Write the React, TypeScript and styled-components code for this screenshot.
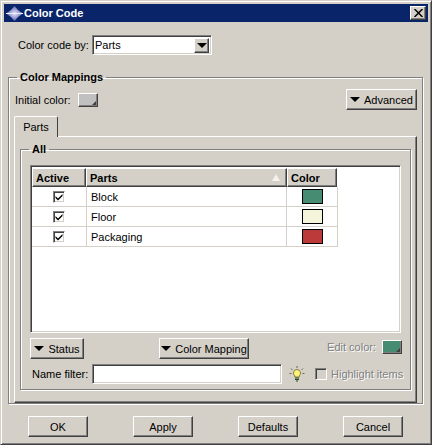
import React from 'react';
import styled, { createGlobalStyle, css } from 'styled-components';

const GlobalStyle = createGlobalStyle`
  * { box-sizing: border-box; }
  html, body { margin: 0; padding: 0; background: #d4d0c8; }
  body { font-family: 'Liberation Sans', Arial, sans-serif; font-size: 11px; color: #000; }
`;

const raised = css`
  background: #d4d0c8;
  border-top: 1px solid #fff;
  border-left: 1px solid #fff;
  border-right: 1px solid #404040;
  border-bottom: 1px solid #404040;
  box-shadow: inset -1px -1px 0 #808080;
`;

const sunken = css`
  background: #fff;
  border-top: 1px solid #808080;
  border-left: 1px solid #808080;
  border-right: 1px solid #fff;
  border-bottom: 1px solid #fff;
  box-shadow: inset 1px 1px 0 #404040, inset -1px -1px 0 #d4d0c8;
`;

const Window = styled.div`
  width: 432px;
  height: 445px;
  padding: 3px 3px 0 3px;
  background: #d4d0c8;
  border-top: 1px solid #d4d0c8;
  border-left: 1px solid #d4d0c8;
  border-right: 1px solid #404040;
  border-bottom: 1px solid #404040;
  box-shadow: inset 1px 1px 0 #fff, inset -1px -1px 0 #808080;
  display: flex;
  flex-direction: column;
`;

const TitleBar = styled.div`
  height: 18px;
  background: #0a246a;
  display: flex;
  align-items: center;
  padding: 0 2px 0 2px;
  gap: 1px;
`;

const TitleText = styled.span`
  flex: 1;
  color: #fff;
  font-weight: 700;
  font-size: 11px;
`;

const CloseButton = styled.button`
  ${raised}
  width: 16px;
  height: 14px;
  padding: 0;
  display: flex;
  align-items: center;
  justify-content: center;
`;

const ComboRow = styled.div`
  display: flex;
  align-items: center;
  height: 20px;
  margin: 13px 0 0 14px;
`;

const Label = styled.span<{ $disabled?: boolean; $w?: number }>`
  flex: none;
  white-space: nowrap;
  width: ${(p) => (p.$w ? `${p.$w}px` : 'auto')};
  color: ${(p) => (p.$disabled ? '#808080' : '#000')};
  text-shadow: ${(p) => (p.$disabled ? '1px 1px 0 #fff' : 'none')};
`;

const Combo = styled.div`
  ${sunken}
  width: 120px;
  height: 20px;
  display: flex;
  align-items: center;
  justify-content: space-between;
  padding: 0 2px 0 2px;
`;

const ComboArrow = styled.span`
  ${raised}
  width: 15px;
  height: 15px;
  display: flex;
  align-items: center;
  justify-content: center;
`;

const Arrow = styled.span`
  width: 0;
  height: 0;
  flex: none;
  border-left: 5px solid transparent;
  border-right: 5px solid transparent;
  border-top: 5px solid #000;
`;

const Group = styled.fieldset`
  margin: 0;
  padding: 0;
  min-width: 0;
  border: 1px solid #808080;
  box-shadow: inset 1px 1px 0 #fff, 1px 1px 0 #fff;
`;

const Legend = styled.legend<{ $indent: number }>`
  padding: 0 3px;
  font-weight: 700;
  margin-left: ${(p) => p.$indent}px;
  line-height: 13px;
`;

const MappingsGroup = styled(Group)`
  width: 415px;
  height: 333px;
  margin: 16px 0 0 4px;
  padding: 0 5px;
`;

const MappingsTop = styled.div`
  display: flex;
  align-items: center;
  justify-content: space-between;
  height: 21px;
  margin: 5px 0 0 0;
  padding-left: 1px;
`;

const InitialRow = styled.div`
  display: flex;
  align-items: center;
  gap: 7px;
`;

const ColorWell = styled.span<{ $color: string; $w: number }>`
  ${raised}
  position: relative;
  display: block;
  width: ${(p) => p.$w}px;
  height: 14px;
  background: ${(p) => p.$color};
  &::after {
    content: '';
    position: absolute;
    right: 1px;
    bottom: 1px;
    width: 0;
    height: 0;
    border-left: 4px solid transparent;
    border-bottom: 4px solid #404040;
  }
`;

const Button = styled.button<{ $w: number }>`
  ${raised}
  width: ${(p) => p.$w}px;
  height: 21px;
  padding: 0;
  display: flex;
  align-items: center;
  justify-content: center;
  gap: 4px;
  font: inherit;
  color: #000;
  white-space: nowrap;
`;

const Tabs = styled.div`
  display: flex;
  margin-top: 6px;
`;

const Tab = styled.div`
  width: 44px;
  height: 21px;
  margin-bottom: -1px;
  position: relative;
  background: #d4d0c8;
  border-top: 1px solid #fff;
  border-left: 1px solid #fff;
  border-right: 1px solid #404040;
  border-top-left-radius: 2px;
  border-top-right-radius: 2px;
  display: flex;
  align-items: center;
  justify-content: center;
`;

const TabPanel = styled.div`
  width: 403px;
  height: 267px;
  border-top: 1px solid #fff;
  border-left: 1px solid #fff;
  border-right: 1px solid #404040;
  border-bottom: 1px solid #404040;
  box-shadow: inset -1px -1px 0 #808080;
  padding: 6px 5px 0 5px;
`;

const AllGroup = styled(Group)`
  height: 247px;
  padding: 0 9px;
`;

const TableFrame = styled.div`
  ${sunken}
  height: 168px;
  margin-top: 9px;
  padding: 2px 1px 1px 1px;
`;

const HeaderRow = styled.div`
  display: flex;
  width: 305px;
  height: 19px;
`;

const HeaderCell = styled.div<{ $w: number }>`
  ${raised}
  position: relative;
  width: ${(p) => p.$w}px;
  font-weight: 700;
  display: flex;
  align-items: center;
  padding-left: 3px;
`;

const SortMark = styled.span`
  position: absolute;
  right: 6px;
  top: 5px;
  width: 0;
  height: 0;
  border-left: 4px solid transparent;
  border-right: 4px solid transparent;
  border-bottom: 7px solid #f4f2ec;
`;

const Row = styled.div`
  display: flex;
  width: 306px;
  height: 20px;
`;

const Cell = styled.div<{ $w: number; $center?: boolean }>`
  width: ${(p) => p.$w}px;
  border-right: 1px solid #d4d0c8;
  border-bottom: 1px solid #d4d0c8;
  display: flex;
  align-items: center;
  justify-content: ${(p) => (p.$center ? 'center' : 'flex-start')};
  padding-left: ${(p) => (p.$center ? 0 : 4)}px;
`;

const Check = styled.span<{ $disabled?: boolean }>`
  flex: none;
  width: 12px;
  height: 12px;
  background: ${(p) => (p.$disabled ? '#d4d0c8' : '#fff')};
  border-top: 1px solid #808080;
  border-left: 1px solid #808080;
  border-right: 1px solid #fff;
  border-bottom: 1px solid #fff;
  box-shadow: inset 1px 1px 0 #404040, inset -1px -1px 0 #d4d0c8;
  display: flex;
  align-items: center;
  justify-content: center;
`;

const Swatch = styled.span<{ $color: string }>`
  display: block;
  width: 21px;
  height: 15px;
  border: 1px solid #000;
  background: ${(p) => p.$color};
`;

const ActionRow = styled.div`
  display: flex;
  align-items: center;
  height: 21px;
  margin-top: 5px;
`;

const StatusSlot = styled.div`
  width: 129px;
`;

const MappingSlot = styled.div`
  width: 120px;
`;

const EditColor = styled.div`
  margin-left: auto;
  margin-right: -1px;
  margin-bottom: 3px;
  display: flex;
  align-items: center;
  gap: 6px;
`;

const FilterRow = styled.div`
  display: flex;
  align-items: center;
  height: 20px;
  margin-top: 5px;
  padding-left: 2px;
`;

const FilterInput = styled.div`
  ${sunken}
  flex: none;
  width: 190px;
  height: 20px;
`;

const Bulb = styled.svg`
  margin-left: 7px;
  flex: none;
`;

const HighlightBox = styled.div`
  margin-left: 10px;
  display: flex;
  align-items: center;
  gap: 4px;
`;

const Footer = styled.div`
  display: flex;
  justify-content: space-between;
  width: 375px;
  margin: 12px 0 0 24px;
`;

const rows = [
  { name: 'Block', color: '#468c72' },
  { name: 'Floor', color: '#f5f5dc' },
  { name: 'Packaging', color: '#bc3a3a' },
];

const Tick = () => (
  <svg width="8" height="8" viewBox="0 0 8 8">
    <path d="M0.5 3 L3 5.5 L7.5 1 V3 L3 7.5 L0.5 5 Z" fill="#000" />
  </svg>
);

const App = () => (
  <>
    <GlobalStyle />
    <Window>
      <TitleBar>
        <svg width="17" height="15" viewBox="0 0 17 15">
          <defs>
            <radialGradient id="star" cx="50%" cy="50%" r="50%">
              <stop offset="0%" stopColor="#e4e6fa" />
              <stop offset="100%" stopColor="#5f66b4" />
            </radialGradient>
          </defs>
          <path d="M8.5 0 L12 4 L17 7.5 L12 11 L8.5 15 L5 11 L0 7.5 L5 4 Z" fill="url(#star)" />
          <path d="M0 7.5 H17" stroke="#eef0ff" strokeWidth="1" />
        </svg>
        <TitleText>Color Code</TitleText>
        <CloseButton>
          <svg width="9" height="8" viewBox="0 0 9 8">
            <path d="M0.5 0 L8.5 8 M8.5 0 L0.5 8" stroke="#000" strokeWidth="1.5" />
          </svg>
        </CloseButton>
      </TitleBar>

      <ComboRow>
        <Label $w={74}>Color code by:</Label>
        <Combo>
          <span>Parts</span>
          <ComboArrow>
            <Arrow />
          </ComboArrow>
        </Combo>
      </ComboRow>

      <MappingsGroup>
        <Legend $indent={3}>Color Mappings</Legend>
        <MappingsTop>
          <InitialRow>
            <Label>Initial color:</Label>
            <ColorWell $color="#c0c0c0" $w={20} />
          </InitialRow>
          <Button $w={71}>
            <Arrow />
            Advanced
          </Button>
        </MappingsTop>
        <Tabs>
          <Tab>Parts</Tab>
        </Tabs>
        <TabPanel>
          <AllGroup>
            <Legend $indent={-1}>All</Legend>
            <TableFrame>
              <HeaderRow>
                <HeaderCell $w={54}>Active</HeaderCell>
                <HeaderCell $w={201}>
                  Parts
                  <SortMark />
                </HeaderCell>
                <HeaderCell $w={50}>Color</HeaderCell>
              </HeaderRow>
              {rows.map((row) => (
                <Row key={row.name}>
                  <Cell $w={55} $center>
                    <Check>
                      <Tick />
                    </Check>
                  </Cell>
                  <Cell $w={200}>{row.name}</Cell>
                  <Cell $w={51} $center>
                    <Swatch $color={row.color} />
                  </Cell>
                </Row>
              ))}
            </TableFrame>
            <ActionRow>
              <StatusSlot>
                <Button $w={54}>
                  <Arrow />
                  Status
                </Button>
              </StatusSlot>
              <MappingSlot>
                <Button $w={90}>
                  <Arrow />
                  Color Mapping
                </Button>
              </MappingSlot>
              <EditColor>
                <Label $disabled>Edit color:</Label>
                <ColorWell $color="#468c72" $w={20} />
              </EditColor>
            </ActionRow>
            <FilterRow>
              <Label $w={60}>Name filter:</Label>
              <FilterInput />
              <Bulb width="16" height="16" viewBox="0 0 16 16">
                <path d="M8 3.5 a3.6 3.6 0 0 1 2.2 6.4 V11 H5.8 V9.9 A3.6 3.6 0 0 1 8 3.5 Z" fill="#fff27a" stroke="#6b6b20" strokeWidth="0.8" />
                <path d="M6 12 H10 M6 13.5 H10 M7 15 H9" stroke="#1f4a20" strokeWidth="1.1" />
                <path d="M8 0 V2 M2 2.5 L3.5 4 M14 2.5 L12.5 4 M0.5 7.5 H2.5 M13.5 7.5 H15.5" stroke="#6a6a3a" strokeWidth="1" />
              </Bulb>
              <HighlightBox>
                <Check $disabled />
                <Label $disabled>Highlight items</Label>
              </HighlightBox>
            </FilterRow>
          </AllGroup>
        </TabPanel>
      </MappingsGroup>

      <Footer>
        <Button $w={60}>OK</Button>
        <Button $w={60}>Apply</Button>
        <Button $w={60}>Defaults</Button>
        <Button $w={60}>Cancel</Button>
      </Footer>
    </Window>
  </>
);

export default App;
